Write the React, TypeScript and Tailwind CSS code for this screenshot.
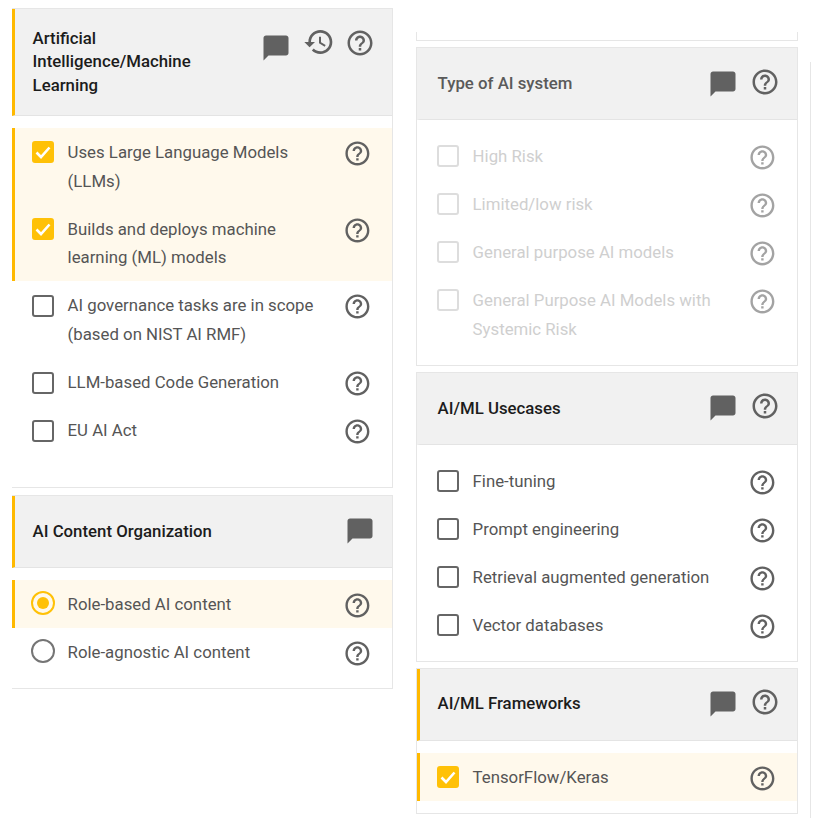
import React from "react";

const CHAT = "M20 2H4c-1.1 0-2 .9-2 2v18l4-4h14c1.1 0 2-.9 2-2V4c0-1.1-.9-2-2-2z";
const HISTORY =
  "M13 3c-4.97 0-9 4.03-9 9H1l3.89 3.89.07.14L9 12H6c0-3.87 3.13-7 7-7s7 3.13 7 7-3.13 7-7 7c-1.93 0-3.68-.79-4.94-2.06l-1.42 1.42C8.27 19.99 10.51 21 13 21c4.97 0 9-4.03 9-9s-4.03-9-9-9zm-1 5v5l4.28 2.54.72-1.21-3.5-2.08V8H12z";
const HELP =
  "M11 18h2v-2h-2v2zm1-16C6.48 2 2 6.48 2 12s4.48 10 10 10 10-4.48 10-10S17.52 2 12 2zm0 18c-4.41 0-8-3.59-8-8s3.59-8 8-8 8 3.59 8 8-3.59 8-8 8zm0-14c-2.21 0-4 1.79-4 4h2c0-1.1.9-2 2-2s2 .9 2 2c0 2-3 1.75-3 5h2c0-2.25 3-2.5 3-5 0-2.21-1.79-4-4-4z";

function Icon({ d, className }: { d: string; className: string }) {
  return (
    <svg viewBox="0 0 24 24" fill="currentColor" className={className}>
      <path d={d} />
    </svg>
  );
}

type RowProps = {
  label: React.ReactNode;
  kind?: "check" | "radio";
  on?: boolean;
  disabled?: boolean;
};

function Row({ label, kind = "check", on, disabled }: RowProps) {
  return (
    <div
      className={`flex items-start border-l-[3px] pb-[9.2px] pl-[17.2px] pr-[20.4px] pt-[10px] ${
        on ? "border-[#ffb900] bg-[#fff9ec]" : "border-transparent"
      }`}
    >
      {kind === "check" ? (
        <div
          className={`mt-[3.4px] flex h-[22px] w-[22px] shrink-0 items-center justify-center rounded-[3px] border-2 ${
            on ? "border-[#ffc107] bg-[#ffc107]" : disabled ? "border-[#dddddd]" : "border-[#666666]"
          }`}
        >
          {on && (
            <svg viewBox="0 0 22 22" className="h-[22px] w-[22px] shrink-0" fill="none" stroke="#ffffff" strokeWidth="2.6">
              <path d="M4.5 11.5l4.5 4.5 8.5-9.5" />
            </svg>
          )}
        </div>
      ) : (
        <div
          className={`ml-[-1px] mr-[-1px] mt-[1px] flex h-[24px] w-[24px] shrink-0 items-center justify-center rounded-full border-[2.5px] ${
            on ? "border-[#ffc107]" : "border-[#757575]"
          }`}
        >
          {on && <div className="h-[12px] w-[12px] rounded-full bg-[#ffc107]" />}
        </div>
      )}
      <div className={`ml-[13.4px] flex-1 text-[16.8px] leading-[28.8px] ${disabled ? "text-[#cfcfcf]" : "text-[#555555]"}`}>
        {label}
      </div>
      <Icon d={HELP} className={`-mb-[1px] ml-2 mt-[1px] h-[28.8px] w-[28.8px] shrink-0 ${disabled ? "text-[#a3a3a3]" : "text-[#616161]"}`} />
    </div>
  );
}

type PanelProps = {
  title: React.ReactNode;
  accent?: boolean;
  muted?: boolean;
  left?: boolean;
  history?: boolean;
  help?: boolean;
  chatTop?: string;
  bodyBottom?: string;
  children: React.ReactNode;
};

function Panel({ title, accent, muted, left, history, help = true, chatTop = "mt-[20.5px]", bodyBottom = "pb-3", children }: PanelProps) {
  return (
    <section className={`border border-[#e6e6e6] bg-white ${left ? "border-l-0" : ""}`}>
      <header
        className={`flex min-h-[72px] items-stretch border-b border-b-[#e4e4e4] border-l-[3px] bg-[#f1f1f1] pl-[17.6px] pr-[17.4px] ${
          accent ? "border-l-[#ffb900]" : "border-l-transparent"
        }`}
      >
        <h2
          className={`flex-1 self-center py-[17.8px] text-[16.8px] font-medium leading-[23.4px] ${
            muted ? "text-[#5a5a5a]" : "text-[#1c1c1c]"
          }`}
        >
          {title}
        </h2>
        <div className="flex shrink-0 items-start text-[#616161]">
          <Icon d={CHAT} className={`${chatTop} h-[30px] w-[30px]`} />
          {history && <Icon d={HISTORY} className="ml-[12px] mt-[17px] h-[32px] w-[32px]" />}
          {help && <Icon d={HELP} className={`${history ? "ml-[10px]" : "ml-[11.5px]"} mt-[18.5px] h-[30px] w-[30px]`} />}
        </div>
      </header>
      <div className={`pt-3 ${bodyBottom}`}>{children}</div>
    </section>
  );
}

export default function App() {
  return (
    <div
      className="flex h-[833px] w-[823px] items-start overflow-hidden bg-white pl-[12px] text-[16px]"
      style={{ fontFamily: "Roboto, 'Noto Sans', sans-serif" }}
    >
      <div className="mt-[8px] flex w-[381px] shrink-0 flex-col gap-[7px]">
        <Panel
          left
          accent
          history
          chatTop="mt-[24px]"
          bodyBottom="pb-[32.6px]"
          title={
            <>
              Artificial
              <br />
              Intelligence/Machine
              <br />
              Learning
            </>
          }
        >
          <Row on label="Uses Large Language Models (LLMs)" />
          <Row on label="Builds and deploys machine learning (ML) models" />
          <Row label="AI governance tasks are in scope (based on NIST AI RMF)" />
          <Row label="LLM-based Code Generation" />
          <Row label="EU AI Act" />
        </Panel>
        <Panel left accent help={false} title="AI Content Organization">
          <Row kind="radio" on label="Role-based AI content" />
          <Row kind="radio" label="Role-agnostic AI content" />
        </Panel>
      </div>

      <div className="ml-[23px] mt-[32px] flex w-[382px] shrink-0 flex-col gap-[6px]">
        <div className="h-[9px] border border-t-0 border-[#e6e6e6]" />
        <Panel muted title="Type of AI system">
          <Row disabled label="High Risk" />
          <Row disabled label="Limited/low risk" />
          <Row disabled label="General purpose AI models" />
          <Row disabled label="General Purpose AI Models with Systemic Risk" />
        </Panel>
        <Panel title="AI/ML Usecases">
          <Row label="Fine-tuning" />
          <Row label="Prompt engineering" />
          <Row label="Retrieval augmented generation" />
          <Row label="Vector databases" />
        </Panel>
        <Panel accent title="AI/ML Frameworks">
          <Row on label="TensorFlow/Keras" />
        </Panel>
      </div>

      <div className="ml-[12px] mt-[62px] h-[756px] w-px shrink-0 bg-[#e6e6e6]" />
    </div>
  );
}
